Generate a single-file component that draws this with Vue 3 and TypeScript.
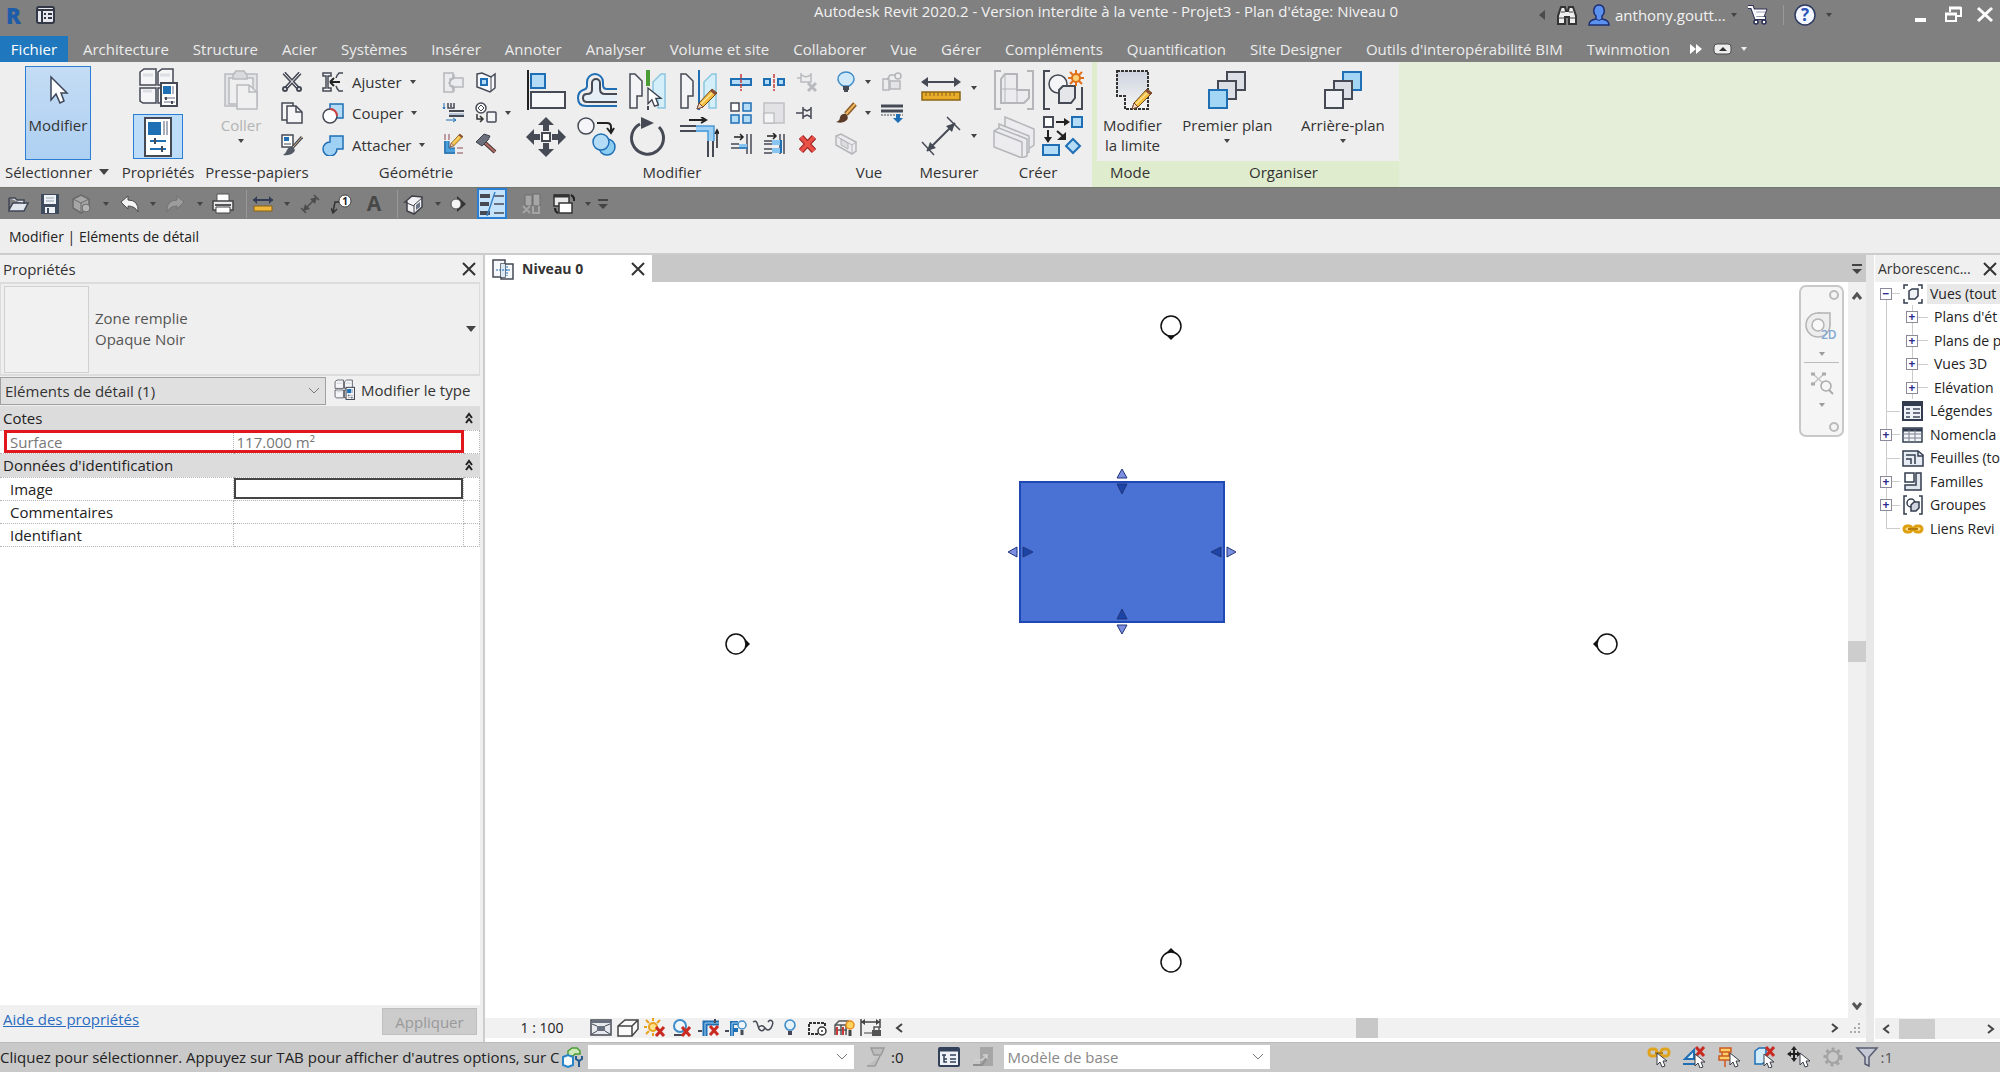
<script setup lang="ts">
import { h, ref } from 'vue'

type Size = [number, number]
interface Glyph { size: Size; body: string }

const cursor = (x: number, y: number) =>
  `<path transform="translate(${x} ${y})" d="M0 0v12l3-3 2 5 3-1-2-5h4z" fill="#fff" stroke="#3a3f4a"/>`
const redCross = (x: number, y: number) =>
  `<path transform="translate(${x} ${y})" d="M0 0l8 9M8 0L0 9" stroke="#c92a22" stroke-width="3"/>`
const pencil = (x: number, y: number) =>
  `<g transform="translate(${x} ${y})"><path d="M0 20l2-6L15 0l5 4L6 18z" fill="#f4bd3c" stroke="#6b4a1c"/><path d="M4 15L17 2" stroke="#fbe39a" stroke-width="1.5"/><path d="M15 0l5 4-2 2-5-4z" fill="#8a4d36"/><path d="M0 20l2-6 4 4z" fill="#f6d9c4" stroke="#7a4a32"/></g>`
const dark = '#454a55'
const blue = '#1f6fb5'
const pale = '#b4dcf7'

const glyphs: Record<string, Glyph> = {
  menu: { size: [20, 20], body: `<rect x="2" y="2" width="17" height="16" rx="2" fill="#e8e8ee" stroke="#333847" stroke-width="2"/><path d="M2 5h17M7 5v13" stroke="#333847" stroke-width="2"/><path d="M9 9h2M13 9h4M9 13h2M13 13h4" stroke="#333847" stroke-width="2"/>` },
  left: { size: [8, 12], body: `<path d="M7 1v10L1 6z" fill="#4b4b4b"/>` },
  binoculars: { size: [22, 22], body: `<path d="M2 20V12l3-9h4l1 4h2l1-4h4l3 9v8h-7v-7h-4v7z" fill="#eee" stroke="#333" stroke-width="2"/><path d="M2 14h7M13 14h7M5 8h4M13 8h4" stroke="#444"/>` },
  user: { size: [22, 22], body: `<path d="M1 21q0-5 7-6v-3q-3-3-2-7 1-4 5-4t5 4q1 4-2 7v3q7 1 7 6z" fill="#5b92f0" stroke="#1d2e74" stroke-width="1.5"/><path d="M8 15q3 3 6 0" stroke="#1d2e74" fill="none"/>` },
  cart: { size: [22, 22], body: `<path d="M1 3h4l4 11h10" fill="none" stroke="#2c2f55" stroke-width="4"/><path d="M6 5h14l-3 8H9z" fill="#fff" stroke="#2c2f55"/><path d="M1 3h4l4 11h9" fill="none" stroke="#fff" stroke-width="2"/><path d="M9 8h9" stroke="#9ea3c4"/><circle cx="9" cy="18" r="2" fill="#fff" stroke="#2c2f55" stroke-width="1.5"/><circle cx="17" cy="18" r="2" fill="#fff" stroke="#2c2f55" stroke-width="1.5"/>` },
  help: { size: [22, 22], body: `<circle cx="11" cy="11" r="10" fill="#f4f7ff" stroke="#2d3a62" stroke-width="1.5"/><text x="11" y="17" text-anchor="middle" font-family="Open Sans, sans-serif" font-weight="700" font-size="17" fill="#2a55b8">?</text>` },
  minimize: { size: [20, 20], body: `<path d="M4 15h11" stroke="#fff" stroke-width="4"/>` },
  restore: { size: [20, 20], body: `<path d="M7 7V3h11v8h-4" fill="none" stroke="#fff" stroke-width="2"/><rect x="3" y="9" width="10" height="7" fill="none" stroke="#fff" stroke-width="2"/><path d="M2 9h12M6 3h12" stroke="#fff" stroke-width="3"/>` },
  closeWin: { size: [20, 20], body: `<path d="M3 3l14 13M17 3L3 16" stroke="#fff" stroke-width="3"/>` },
  more: { size: [14, 12], body: `<path d="M1 1v10l6-5zM7 1v10l6-5z" fill="#fff"/>` },
  panelToggle: { size: [20, 12], body: `<rect x="1" y="1" width="17" height="10" rx="3" fill="#eee" stroke="#4a4a4a"/><path d="M6 8l4-4 4 4z" fill="#333"/>` },
  caretWhite: { size: [6, 4], body: `<path d="M0 0h6L3 4z" fill="#eee"/>` },

  bigCursor: { size: [24, 32], body: `<path d="M5 2v23l5-6 4 9 4-2-3-8h6z" fill="#fff" stroke="#3c4658" stroke-width="1.5"/>` },
  typeProps: { size: [40, 40], body: `<g fill="#f6f6f8" stroke="${dark}" stroke-width="1.5"><path d="M2 4l4-3h12v16H2zM20 4l4-3h11v16H20zM2 20h16v15l-13 0-3-2zM20 20h14v15H20z"/></g><path d="M5 7h10M22 7h10M5 23h9" stroke="#dcdee4" stroke-width="3"/><rect x="23" y="15" width="16" height="23" fill="#fff" stroke="${dark}" stroke-width="2"/><rect x="25" y="18" width="8" height="8" fill="${blue}"/><path d="M35 18v8M26 30h11M26 34h11" stroke="#66708a"/><path d="M28 29v3M34 33v3" stroke="${dark}" stroke-width="2"/>` },
  props: { size: [32, 42], body: `<rect x="3" y="2" width="26" height="38" fill="#fff" stroke="${dark}" stroke-width="2"/><rect x="6" y="6" width="13" height="13" fill="${blue}"/><path d="M22 5v14M25 5v14" stroke="#a7adb9" stroke-width="2"/><path d="M8 25h16M8 33h16" stroke="${blue}" stroke-width="2"/><path d="M13 22v6M20 30v6" stroke="${dark}" stroke-width="2"/>` },
  paste: { size: [36, 42], body: `<g fill="#e4e4e6" stroke="#b9babe" stroke-width="1.5"><path d="M2 5h32v32H2z"/><path d="M6 9h24v26H6z" fill="#efefef"/><path d="M10 6l3-4h8l3 4v4H10z" fill="#dadadd"/><path d="M14 16h12l8 7v17H14z" fill="#f0f0f0"/><path d="M26 16v7h8" fill="none"/></g>` },
  cut: { size: [22, 22], body: `<path d="M3 2l14 15M19 2L5 17" stroke="${dark}" stroke-width="4"/><path d="M3 2l14 15M19 2L5 17" stroke="#fff"/><circle cx="4" cy="18" r="2" fill="#fff" stroke="${dark}" stroke-width="2"/><circle cx="18" cy="18" r="2" fill="#fff" stroke="${dark}" stroke-width="2"/>` },
  copyDoc: { size: [22, 22], body: `<g fill="#f5f5f7" stroke="${dark}" stroke-width="1.5"><path d="M1 1h11v17H1z"/><path d="M6 4h9l6 6v11H6z"/><path d="M15 4v6h6" fill="none"/></g>` },
  matchProps: { size: [22, 22], body: `<rect x="1" y="1" width="11" height="12" fill="#fff" stroke="${dark}" stroke-width="1.5"/><rect x="3" y="3" width="5" height="4" fill="${blue}"/><path d="M3 10h7" stroke="${dark}"/><path d="M21 3l-9 10" stroke="${dark}" stroke-width="3"/><path d="M21 3l-9 10" stroke="#d8b07a"/><path d="M2 21q3-2 4-5 2-4 6-3 3 3 1 5-4 4-11 3z" fill="#555b66"/>` },
  cope: { size: [22, 22], body: `<path d="M1 2h8v3H6v12h3v3H1v-3h3V5H1z" fill="#f5f5f5" stroke="${dark}" stroke-width="1.5"/><path d="M21 2h-4q-2 2-3 5M21 20h-4q-2-2-3-5" fill="none" stroke="${dark}" stroke-width="1.5"/><path d="M8 11h10M8 11l4-4M8 11l4 4" stroke="#222" stroke-width="2" fill="none"/>` },
  cutGeo: { size: [22, 22], body: `<rect x="8" y="2" width="13" height="14" fill="${pale}" stroke="${blue}" stroke-width="1.5"/><circle cx="8" cy="14" r="7" fill="#fff" stroke="${dark}" stroke-width="1.5"/><path d="M8 7a7 7 0 0 1 7 7" fill="none" stroke="#d24141" stroke-width="2"/>` },
  joinGeo: { size: [22, 22], body: `<path d="M8 2h13v13h-6a7 7 0 1 1-7-7z" fill="#9fd1f5" stroke="${blue}" stroke-width="1.5"/>` },
  joinRoof: { size: [22, 22], body: `<path d="M2 2h9v6h-3v7h3v6H2zM12 7h9v9h-9v3l-5-7 5-7z" fill="#ececee" stroke="#b5b6ba" stroke-width="1.5"/>` },
  wallJoin: { size: [22, 22], body: `<path d="M2 3l5-1 9 4 4-3v14l-5 4-10-4-3-1z" fill="#f6f8fb" stroke="${dark}" stroke-width="1.5"/><path d="M16 6v14" stroke="${dark}"/><rect x="6" y="8" width="6" height="6" fill="${pale}" stroke="${blue}" stroke-width="2"/>` },
  beamJoin: { size: [22, 22], body: `<path d="M6 1v5h6V1M9 1v4" fill="none" stroke="${dark}" stroke-width="1.5"/><path d="M2 1v6M1 5l1 2 1-2" stroke="${blue}"/><path d="M7 9h15M7 14h15" stroke="${dark}" stroke-width="2"/><path d="M7 12h15" stroke="#b8c4d8" stroke-width="2"/><path d="M4 18h10" stroke="${blue}"/><path d="M11 16l3 2-3 2" stroke="${blue}" fill="none"/>` },
  splitFace: { size: [24, 22], body: `<circle cx="7" cy="6" r="5" fill="#fff" stroke="${dark}" stroke-width="1.5"/><path d="M4 6l3-3 3 3-3 3z" fill="none" stroke="${dark}"/><rect x="13" y="10" width="9" height="10" rx="1" fill="#f5f5f7" stroke="${dark}" stroke-width="1.5"/><path d="M3 12v5h6M6 14l3 3-3 3" fill="none" stroke="#333" stroke-width="1.5"/>` },
  cornerEdit: { size: [22, 22], body: `<path d="M2 8h5v7h6v6H2z" fill="#4aa0dd"/><path d="M3 8v12h10M7 8v7h6" fill="none" stroke="#235a90"/><path d="M3 1v6M7 1v6M15 15h6M15 20h6" stroke="#8a4a55"/><g transform="translate(8 1) scale(.65)">${pencil(0, 0)}</g>` },
  demolish: { size: [22, 22], body: `<path d="M9 9l11 10" stroke="#4b3130" stroke-width="4"/><path d="M9 9l11 10" stroke="#b07068" stroke-width="2"/><path d="M1 9l8-8 6 2-2 4-6 6z" fill="#6b717c" stroke="#3d414b"/>` },

  align: { size: [40, 40], body: `<path d="M2 0v40" stroke="#222" stroke-width="2"/><rect x="5" y="4" width="14" height="14" fill="${pale}" stroke="${blue}" stroke-width="2"/><rect x="5" y="22" width="34" height="16" fill="#f6f6f8" stroke="${dark}" stroke-width="2"/>` },
  offset: { size: [40, 40], body: `<path d="M40 19H30q-4 0-4-4v-3a8 8 0 0 0-16 0v4q0 3-4 4-5 2-5 8 0 8 8 8h31" fill="none" stroke="${blue}" stroke-width="2"/><path d="M40 24H28q-5 0-5-5v-6a4 4 0 0 0-8 0v7q0 4-5 4-4 0-4 4t4 4h30" fill="#e6eef6" stroke="${dark}" stroke-width="2"/>` },
  mirrorPick: { size: [40, 40], body: `<path d="M2 4h5l7 7v15H9v12H2z" fill="#f4f4f6" stroke="${dark}" stroke-width="1.5"/><path d="M37 4h-4l-8 8v16l5 2v8h7z" fill="#d4eefa" stroke="#8bc6e0" stroke-width="1.5"/><path d="M20 0v16" stroke="#4a9c34" stroke-width="4"/><path d="M20 36v4" stroke="${dark}" stroke-width="2"/><g transform="translate(20 18) scale(1.3)">${cursor(0, 0)}</g>` },
  mirrorDraw: { size: [40, 40], body: `<path d="M2 4h5l7 7v15H9v12H2z" fill="#f4f4f6" stroke="${dark}" stroke-width="1.5"/><path d="M37 4h-4l-8 8v16l5 2v8h7z" fill="#d4eefa" stroke="#8bc6e0" stroke-width="1.5"/><path d="M20 0v40" stroke="${blue}" stroke-width="2"/>${pencil(18, 19)}` },
  move: { size: [40, 40], body: `<path d="M20 0l8 8h-5v6h-6V8h-5zM20 40l8-8h-5v-6h-6v6h-5zM0 20l8-8v5h6v6H8v5zM40 20l-8-8v5h-6v6h6v5z" fill="${dark}"/><rect x="16" y="16" width="8" height="8" fill="#fff" stroke="${dark}" stroke-width="2"/>` },
  copy: { size: [40, 40], body: `<circle cx="9" cy="9" r="8" fill="#f6f6f8" stroke="${dark}" stroke-width="1.5"/><path d="M20 6h10q4 0 4 4v5M30 11l4 5 3-5" fill="none" stroke="#222" stroke-width="2"/><circle cx="30" cy="30" r="8" fill="#8ecdf2" stroke="${blue}" stroke-width="1.5"/><circle cx="24" cy="25" r="8" fill="${pale}" stroke="${blue}" stroke-width="1.5"/>` },
  rotate: { size: [40, 40], body: `<path d="M12 7a16 16 0 1 0 19 3" fill="none" stroke="${dark}" stroke-width="3"/><path d="M13 0l13 6-13 6z" fill="${dark}"/>` },
  trim: { size: [40, 40], body: `<path d="M17 9h18v15h-6v-9H17z" fill="#9fd1f5"/><path d="M10 3h17M22 0l5 3-5 3" fill="none" stroke="#222" stroke-width="2"/><path d="M1 9h16M1 14h16M29 24v16M34 24v16" stroke="${dark}" stroke-width="2"/><path d="M17 9h18v15M17 14h12v10" fill="none" stroke="#4a9ad8" stroke-width="1.5"/><path d="M38 31V13M36 17l2-4 2 4" stroke="#222" stroke-width="1.5" fill="none"/>` },
  split: { size: [22, 22], body: `<rect x="1" y="8" width="20" height="6" fill="${pale}" stroke="${blue}" stroke-width="2"/><path d="M11 3v17" stroke="#c83a3a" stroke-width="1.5" stroke-dasharray="4 1"/>` },
  splitGap: { size: [22, 22], body: `<rect x="1" y="8" width="6" height="6" fill="${pale}" stroke="${blue}" stroke-width="2"/><rect x="15" y="8" width="6" height="6" fill="${pale}" stroke="${blue}" stroke-width="2"/><path d="M11 3v17" stroke="#c83a3a" stroke-width="1.5" stroke-dasharray="4 1"/>` },
  unpin: { size: [22, 22], body: `<path d="M5 2v9h10V2M5 4l5 2 5-2M1 7h4" stroke="#b9babe" fill="none" stroke-width="1.5"/><path d="M12 12l8 8M20 12l-8 8" stroke="#b9babe" stroke-width="3"/>` },
  array: { size: [22, 22], body: `<g stroke="${blue}" stroke-width="1.5" fill="${pale}"><rect x="1" y="1" width="8" height="8" fill="#fff" stroke="${dark}"/><rect x="13" y="1" width="8" height="8"/><rect x="1" y="13" width="8" height="8"/><rect x="13" y="13" width="8" height="8"/></g>` },
  scale: { size: [22, 22], body: `<rect x="1" y="1" width="20" height="20" fill="#e2e2e5" stroke="#c0c1c5" stroke-width="1.5"/><rect x="1" y="11" width="10" height="10" fill="#f4f4f4" stroke="#aeb0b5"/>` },
  pin: { size: [22, 22], body: `<path d="M0 11h7M7 5v12M15 5v12M7 7l4 2 4-2M7 15l4-2 4 2" fill="none" stroke="${dark}" stroke-width="1.5"/>` },
  trimOne: { size: [22, 22], body: `<path d="M4 4h9M10 1l3 3-3 3" fill="none" stroke="#222" stroke-width="1.5"/><path d="M1 11h8M1 15h8M17 1v20M21 1v20" stroke="${dark}" stroke-width="1.5"/><path d="M9 11h8v5H9z" fill="#86c4f1"/><path d="M9 15h9" stroke="${blue}" stroke-width="1.5"/>` },
  trimMany: { size: [22, 22], body: `<path d="M4 3h9M10 0l3 3-3 3" fill="none" stroke="#222" stroke-width="1.5"/><path d="M1 8h8M1 11h8M1 16h8M1 20h8M17 1v20M21 1v20" stroke="${dark}" stroke-width="1.5"/><path d="M9 7h8v5H9zM9 15h8v5H9z" fill="#86c4f1"/><path d="M18 7v13" stroke="${blue}" stroke-width="2"/>` },
  remove: { size: [22, 22], body: `<path d="M5 4l13 14M18 4L5 18" stroke="#9b1d1d" stroke-width="6"/><path d="M5 4l13 14M18 4L5 18" stroke="#e85048" stroke-width="4"/>` },

  bulb: { size: [22, 22], body: `<path d="M8 15q-5-3-5-7a8 7 0 0 1 16 0q0 4-5 7z" fill="#cfe9fb" stroke="#3f8cc8" stroke-width="1.5"/><path d="M8 16h6M8 18h6M9 20h4" stroke="${dark}" stroke-width="2"/>` },
  box3: { size: [22, 22], body: `<path d="M2 8h6v11H2zM6 9l3-5h5" fill="#ececee" stroke="#b5b6ba" stroke-width="1.5"/><circle cx="17" cy="5" r="3" fill="#eee" stroke="#b5b6ba" stroke-width="1.5"/><path d="M9 10h10v8H9z" fill="#e4e4e6" stroke="#b5b6ba" stroke-width="1.5"/>` },
  brush: { size: [22, 22], body: `<path d="M20 2l-9 10" stroke="#8a5a24" stroke-width="5"/><path d="M20 2l-9 10" stroke="#edb65e" stroke-width="2"/><path d="M1 20q4-1 4-5 2-4 6-3 3 3 1 6-4 4-11 2z" fill="#5b3a28"/>` },
  lines: { size: [22, 22], body: `<path d="M0 4h22M0 9h22" stroke="${dark}" stroke-width="3"/><path d="M0 13h22" stroke="${dark}" stroke-dasharray="2 1"/><path d="M15 12v4h-3l5 5 5-5h-3v-4z" fill="${blue}"/>` },
  greyCube: { size: [22, 22], body: `<path d="M1 3l5-2 15 8v9l-4 3L1 12z" fill="#ececee" stroke="#b5b6ba" stroke-width="1.5"/><path d="M6 6v6l7 4v-6z" fill="#ddd" stroke="#b5b6ba"/><path d="M1 3l16 9v9M17 12l4-3" fill="none" stroke="#b5b6ba"/>` },
  ruler: { size: [40, 40], body: `<path d="M2 14h36" stroke="${dark}" stroke-width="2"/><path d="M0 14l7-5v10zM40 14l-7-5v10z" fill="${dark}"/><rect x="1" y="24" width="38" height="8" fill="#e8ac28" stroke="#8a6414" stroke-width="1.5"/><path d="M5 24v4M9 24v4M13 24v4M17 24v4M21 24v4M25 24v4M29 24v4M33 24v4" stroke="#8a6414"/>` },
  dimension: { size: [40, 40], body: `<path d="M6 35L34 7" stroke="${dark}" stroke-width="2"/><path d="M1 26l12 13M26 1l13 13" stroke="${dark}" stroke-width="1.5"/><path d="M6 35l3-9 6 6zM34 7l-9 3 6 6z" fill="${dark}"/>` },
  assembly: { size: [42, 42], body: `<g fill="#ececee" stroke="#b5b6ba" stroke-width="2"><path d="M8 2H2v38h6M34 2h6v38h-6" fill="none"/><path d="M8 10l4-5h12v16h12v8l-5 5H8z"/><path d="M8 20h16v14M12 5v29" fill="none" stroke-width="1"/></g>` },
  group: { size: [42, 42], body: `<path d="M8 2H2v38h6M34 40h6V18" fill="none" stroke="${dark}" stroke-width="2"/><circle cx="16" cy="15" r="9" fill="#f5f5f7" stroke="${dark}" stroke-width="1.5"/><path d="M17 21l4-4h12v12l-4 5H17z" fill="#e4e6ea" stroke="${dark}" stroke-width="2"/><path d="M34 1v16M26 9h16M28 3l12 12M40 3L28 15" stroke="#e0701a" stroke-width="2"/><circle cx="34" cy="9" r="4" fill="#fbd27a" stroke="#e0701a" stroke-width="2"/>` },
  parts: { size: [42, 42], body: `<g fill="#ececee" stroke="#b5b6ba" stroke-width="1.5"><path d="M12 1l29 12v16l-4 3-25-12z"/><path d="M6 8l30 12v16l-4 2L6 27z"/><path d="M1 15l5-3 28 11v17l-5 2-28-11z"/><path d="M1 15l28 11v15" fill="none"/></g>` },
  similar: { size: [42, 42], body: `<rect x="2" y="1" width="9" height="10" fill="#fff" stroke="${dark}" stroke-width="2"/><rect x="30" y="1" width="10" height="10" fill="${pale}" stroke="${blue}" stroke-width="2"/><rect x="1" y="29" width="16" height="10" fill="${pale}" stroke="${blue}" stroke-width="2"/><path d="M31 23l7 7-7 7-7-7z" fill="${pale}" stroke="${blue}" stroke-width="2"/><path d="M14 6h10M6 14v9M15 15l7 6" stroke="#222" stroke-width="2"/><path d="M22 2l6 4-6 4zM2 21l4 6 4-6zM24 16v8h-9z" fill="#222"/>` },
  boundary: { size: [40, 42], body: `<defs><linearGradient id="gb" x1="0" y1="0" x2="0" y2="1"><stop offset="0" stop-color="#cdd3de"/><stop offset="1" stop-color="#f6f6f6"/></linearGradient></defs><path d="M4 2h31v38H12V27H4z" fill="url(#gb)" stroke="#333" stroke-width="2" stroke-dasharray="3 1"/>${pencil(19, 20)}` },
  front: { size: [40, 40], body: `<g stroke="${dark}" stroke-width="2" fill="#dcdfe6"><path d="M20 2h18v18H20z"/><path d="M11 11h18v18H11z"/><path d="M2 20h18v18H2z" fill="#a3d5f5" stroke="${blue}"/></g>` },
  back: { size: [40, 40], body: `<g stroke="${dark}" stroke-width="2" fill="#dcdfe6"><path d="M20 2h18v18H20z" fill="#a3d5f5" stroke="${blue}"/><path d="M11 11h18v18H11z"/><path d="M2 20h18v18H2z" fill="#eef0f4"/></g>` },

  open: { size: [22, 22], body: `<path d="M2 5h6l2 2h7v4M2 5v12l4-7h15l-4 8H2" fill="#e2e7ee" stroke="#3f4653" stroke-width="1.5"/>` },
  save: { size: [22, 22], body: `<path d="M2 1h18v20H2z" fill="#3f4a5c"/><path d="M5 2h12v9H5zM6 14h10v6H6z" fill="#eef1f5"/><path d="M7 5h8M7 8h8" stroke="#9aa4b4"/><path d="M9 15v5" stroke="#3f4a5c" stroke-width="2"/>` },
  sync: { size: [22, 22], body: `<path d="M2 6l8-4 8 4v9l-8 5-8-5z" fill="#a6a6a6" stroke="#6a6a6a" stroke-width="1.5"/><path d="M2 6l8 4 8-4M10 10v9" fill="none" stroke="#6a6a6a"/><circle cx="15" cy="15" r="4" fill="#b4b4b4" stroke="#6a6a6a"/>` },
  undo: { size: [22, 22], body: `<path d="M3 9l7-6v4q11 0 10 12-3-6-10-6v3z" fill="#f4f4f4" stroke="#4a4a4a"/>` },
  redo: { size: [22, 22], body: `<path d="M19 9l-7-6v4Q1 7 2 19q3-6 10-6v3z" fill="#9c9c9c" stroke="#727272"/>` },
  print: { size: [22, 22], body: `<path d="M5 1h12v8H5z" fill="#fff" stroke="#555"/><path d="M1 8h20v9H1z" fill="#e9eaee" stroke="#444" stroke-width="1.5"/><path d="M4 14h14v6H4z" fill="#fff" stroke="#444"/><path d="M3 12h16" stroke="#555" stroke-width="2"/>` },
  rulerSm: { size: [22, 22], body: `<path d="M1 7h20" stroke="#333c55" stroke-width="2"/><path d="M1 7l4-4v8zM21 7l-4-4v8z" fill="#333c55"/><path d="M2 13h18v5H2z" fill="#eeb63a" stroke="#8a6414"/>` },
  dimSm: { size: [22, 22], body: `<path d="M5 17L17 5M2 15l5 5M15 2l5 5" stroke="#4d4d4d" stroke-width="1.5"/><path d="M4 18l2-7 5 5zM18 4l-7 2 5 5z" fill="#4d4d4d"/>` },
  tag: { size: [22, 22], body: `<circle cx="14" cy="8" r="6" fill="#fff" stroke="#444"/><text x="14" y="12" text-anchor="middle" font-family="Open Sans, sans-serif" font-weight="700" font-size="10" fill="#222">1</text><path d="M8 9H4L2 19M0 15l2 5 4-4" fill="none" stroke="#333" stroke-width="1.5"/>` },
  textA: { size: [22, 28], body: `<text x="11" y="21" text-anchor="middle" font-family="Open Sans, sans-serif" font-weight="700" font-size="21" fill="#484848">A</text>` },
  house: { size: [22, 22], body: `<path d="M2 9l7-6 10 1v10l-8 7-7-3V9z" fill="#f2f2f4" stroke="#3f3f48" stroke-width="1.5"/><path d="M11 21v-9l8-7M4 10l7 3" fill="none" stroke="#3f3f48"/><path d="M13 12l4-3v5l-4 3z" fill="#6a7385"/>` },
  section: { size: [22, 22], body: `<path d="M7 3l9 8-9 8z" fill="#333"/><circle cx="6" cy="11" r="5" fill="#f5f5f5" stroke="#555"/>` },
  thin: { size: [26, 26], body: `<path d="M1 5h10M1 13h9M1 22h10" stroke="${dark}" stroke-width="4"/><path d="M15 5h10M15 13h10M15 22h10" stroke="${dark}" stroke-width="1.5"/><path d="M16 1L8 25" stroke="#3a84c9" stroke-width="1.5"/>` },
  closeHidden: { size: [22, 22], body: `<path d="M4 2h7v11H4zM12 1h7v12h-7z" fill="#a6a6a6" stroke="#6c6c6c"/><path d="M2 13l7 7M9 13l-7 7M12 13v7h6v-7" stroke="#a4a4a4" stroke-width="2"/>` },
  switchWin: { size: [22, 22], body: `<path d="M1 2h15v11H1z" fill="#e9e9ec" stroke="#333" stroke-width="1.5"/><path d="M1 3h15" stroke="#333" stroke-width="3"/><path d="M6 10h13v10H6z" fill="#fff" stroke="#333" stroke-width="1.5"/><path d="M18 2q4 2 3 6M2 15q0 4 3 5" stroke="#222" stroke-width="2" fill="none"/>` },
  customize: { size: [12, 14], body: `<path d="M1 3h10" stroke="#444" stroke-width="2"/><path d="M1 7h10l-5 5z" fill="#444"/>` },

  sheet: { size: [22, 22], body: `<path d="M1 2h12v17H1zM9 6h12v15H9z" fill="#f6f8fb" stroke="${dark}" stroke-width="1.5"/><path d="M9 6h4v13H9z" fill="#dce8f4"/><path d="M4 12h14M15 8v10" stroke="${blue}" stroke-dasharray="2 1"/>` },
  x: { size: [14, 14], body: `<path d="M1 1l12 12M13 1L1 13" stroke="#333" stroke-width="2"/>` },
  caret: { size: [6, 4], body: `<path d="M0 0h6L3 4z" fill="#444"/>` },
  caretBig: { size: [10, 6], body: `<path d="M0 0h10L5 6z" fill="#444"/>` },
  collapse: { size: [10, 12], body: `<path d="M2 6l3-4 3 4M2 11l3-4 3 4" fill="none" stroke="#222" stroke-width="2"/>` },
  chevDown: { size: [12, 8], body: `<path d="M1 1l5 5 5-5" fill="none" stroke="#777"/>` },
  up: { size: [12, 8], body: `<path d="M2 7l4-5 4 5" fill="none" stroke="#555" stroke-width="3"/>` },
  down: { size: [12, 8], body: `<path d="M2 1l4 5 4-5" fill="none" stroke="#555" stroke-width="3"/>` },
  chevLeft: { size: [8, 12], body: `<path d="M7 2L2 6l5 4" fill="none" stroke="#444" stroke-width="2"/>` },
  chevRight: { size: [8, 12], body: `<path d="M1 2l5 4-5 4" fill="none" stroke="#444" stroke-width="2"/>` },
  grip: { size: [14, 14], body: `<path d="M11 3h2M7 7h2M11 7h2M3 11h2M7 11h2M11 11h2" stroke="#aaa" stroke-width="2"/>` },
  wheel: { size: [36, 34], body: `<circle cx="14" cy="15" r="12" fill="#ededed" stroke="#b3b3b3" stroke-width="1.5"/><path d="M14 3h12v12" fill="#ededed" stroke="#b3b3b3" stroke-width="1.5"/><circle cx="14" cy="15" r="6" fill="#f8f8f8" stroke="#b3b3b3" stroke-width="1.5"/><text x="17" y="29" font-family="Open Sans, sans-serif" font-weight="600" font-size="12" fill="#7fa8d0">2D</text>` },
  zoomFit: { size: [24, 24], body: `<path d="M3 3l10 9M14 3L3 13" stroke="#c4c4c4" stroke-width="1.5"/><path d="M1 3h4M12 3h4M1 13h4" stroke="#aaa" stroke-width="3"/><circle cx="16" cy="15" r="5" fill="#f6f6f6" stroke="#aaa" stroke-width="1.5"/><path d="M19 19l4 4" stroke="#aaa" stroke-width="2"/>` },

  detail: { size: [22, 20], body: `<rect x="1" y="2" width="20" height="15" fill="#e7e9ee" stroke="${dark}" stroke-width="1.5"/><path d="M1 4h20" stroke="#68707f" stroke-width="2"/><rect x="7" y="8" width="8" height="5" fill="#68707f"/><path d="M2 16l5-3M20 16l-5-3M2 6l5 2M20 6l-5 2" stroke="${dark}"/>` },
  cube: { size: [22, 20], body: `<path d="M1 8l7-6h13v9l-6 7H1zM1 8h14v10M15 8l6-6" fill="#fafafa" stroke="#444" stroke-width="1.5"/>` },
  sunOff: { size: [22, 20], body: `<circle cx="9" cy="9" r="4" fill="#ffe38a" stroke="#e8a21c" stroke-width="2"/><path d="M9 0v3M9 15v3M0 9h3M2 2l3 3M16 2l-3 3M2 16l3-3" stroke="#e8a21c" stroke-width="2"/>${redCross(12, 9)}` },
  shadowOff: { size: [22, 20], body: `<circle cx="9" cy="8" r="6" fill="#eef6fc" stroke="#3f8cc8" stroke-width="2"/><path d="M3 17h9" stroke="${dark}" stroke-width="2"/>${redCross(11, 9)}` },
  cropOff: { size: [22, 20], body: `<path d="M7 18V5h14" fill="none" stroke="${blue}" stroke-width="5"/><path d="M7 18V5h14" fill="none" stroke="#a9d4f2"/><path d="M0 13h4M17 1v4" stroke="${dark}" stroke-width="2"/>${redCross(12, 8)}` },
  cropShow: { size: [22, 20], body: `<path d="M7 18V5h6M7 12h6" fill="none" stroke="${blue}" stroke-width="4"/><path d="M7 18V5h6" fill="none" stroke="#a9d4f2"/><path d="M0 13h4" stroke="${dark}" stroke-width="2"/><circle cx="17" cy="7" r="4" fill="#eef6fc" stroke="#3f8cc8" stroke-width="1.5"/><path d="M17 12v5" stroke="${dark}" stroke-width="3"/>` },
  glasses: { size: [22, 20], body: `<path d="M1 4q3-2 4 1t2 6q3 4 6-1 3 4 6 0 3-5 1-7-2-2-4 1M7 9q3-3 6 1" fill="none" stroke="${dark}" stroke-width="1.5"/>` },
  bulbSm: { size: [12, 20], body: `<path d="M4 12q-3-2-3-5a5 5 0 0 1 10 0q0 3-3 5z" fill="#e4f2fc" stroke="#3f8cc8" stroke-width="1.5"/><path d="M4 14h4M4 16h4" stroke="#445" stroke-width="2"/>` },
  tempView: { size: [22, 20], body: `<path d="M12 16H3V5h16v4" fill="none" stroke="#333" stroke-width="2" stroke-dasharray="3 1"/><circle cx="16" cy="13" r="4" fill="#fff" stroke="#333" stroke-width="1.5"/><circle cx="16" cy="13" r="1" fill="#333"/>` },
  analytic: { size: [22, 20], body: `<path d="M2 17V7l4-4h9l-2 4H2M2 12h12M8 17V7M13 17V7" fill="none" stroke="#555" stroke-width="1.5"/><path d="M4 9v8M10 9v8" stroke="#c83a3a" stroke-width="2"/><circle cx="17" cy="7" r="4" fill="#ffd35e" stroke="#e8891c" stroke-width="1.5"/><path d="M17 12v6" stroke="#444" stroke-width="3"/>` },
  constraint: { size: [24, 20], body: `<path d="M2 1v17M21 1v9M2 4h19" stroke="#444" stroke-width="1.5"/><path d="M2 4l4-3v6zM21 4l-4-3v6z" fill="#444"/><path d="M5 15h8" stroke="#999" stroke-width="2"/><rect x="13" y="12" width="9" height="6" fill="#555"/><path d="M15 12V9h5v3" fill="none" stroke="#555" stroke-width="1.5"/>` },

  tools: { size: [22, 22], body: `<path d="M6 10V5l4-3h5l3 3v3h-5l-2 2z" fill="#cdeab8" stroke="#4a9c34" stroke-width="1.5"/><path d="M1 11l5-2 5 2v8l-5 2-5-2z" fill="#f4fafe" stroke="#2a86c6" stroke-width="2"/><path d="M14 10v3l3 2 3-2v-3M17 14v7" stroke="#235a90" fill="none" stroke-width="2"/>` },
  editReq: { size: [20, 22], body: `<path d="M5 2h13l-3 7H8zM1 20h8l5-10" fill="#bdbdbd" stroke="#9a9a9a" stroke-width="1.5"/>` },
  workset: { size: [22, 22], body: `<rect x="1" y="2" width="20" height="18" rx="1" fill="#eef1f5" stroke="#33405a" stroke-width="2"/><path d="M1 4h20" stroke="#33405a" stroke-width="3"/><path d="M4 9h4M6 9v7h3M6 13h3M12 9h6M12 13h6M12 16h6" stroke="#33405a" stroke-width="1.5" fill="none"/>` },
  exclude: { size: [22, 22], body: `<path d="M8 1h13v19H8z" fill="#a6a6a6"/><path d="M1 19h9l6-9" stroke="#8f8f8f" stroke-width="2" fill="none"/><path d="M3 14h7l4-4M11 9h4v4" stroke="#d2d2d2" fill="none" stroke-width="1.5"/>` },
  selLinks: { size: [24, 22], body: `<rect x="2" y="3" width="8" height="7" rx="3" fill="none" stroke="#e0a41c" stroke-width="3"/><rect x="14" y="3" width="8" height="7" rx="3" fill="none" stroke="#e0a41c" stroke-width="3"/><path d="M8 7h8" stroke="#b67f0c" stroke-width="2"/>${cursor(10, 7)}` },
  selUnder: { size: [24, 22], body: `<path d="M1 18h14M3 13l9-9v9z" fill="#d9ecfa" stroke="${blue}" stroke-width="2"/>${redCross(14, 1)}${cursor(13, 8)}` },
  selPinned: { size: [24, 22], body: `<path d="M3 2h11v4H3zM5 6h7v4H5zM2 10h13v4H2zM8 14v7" fill="#ffcf6a" stroke="#cc5a22" stroke-width="1.5"/>${cursor(13, 7)}` },
  selFace: { size: [24, 22], body: `<path d="M3 5l4-3h7v13l-4 3H3z" fill="#d3ecfb" stroke="${blue}" stroke-width="1.5"/>${redCross(14, 1)}${cursor(12, 8)}` },
  dragSel: { size: [24, 22], body: `<path d="M7 2v12M1 8h12" stroke="#222" stroke-width="2"/><path d="M7 0L4 4h6zM7 16l-3-4h6zM0 8l4-3v6zM14 8l-4-3v6z" fill="#222"/>${cursor(13, 7)}` },
  gear: { size: [22, 22], body: `<circle cx="11" cy="11" r="6" fill="none" stroke="#a2a2a2" stroke-width="2"/><circle cx="11" cy="11" r="8" fill="none" stroke="#a2a2a2" stroke-width="3" stroke-dasharray="3 3"/>` },
  filter: { size: [24, 22], body: `<path d="M2 2h20l-8 9v9l-4-2v-7z" fill="#c5c9d6" stroke="#565b70" stroke-width="1.5"/>` },

  views: { size: [20, 20], body: `<path d="M5 1H1v4M15 1h4v4M5 19H1v-4M15 19h4v-4" fill="none" stroke="#333c4e" stroke-width="1.5"/><path d="M6 7l3-2h6v7l-3 3H6z" fill="#eef1f5" stroke="#333c4e" stroke-width="1.5"/>` },
  legend: { size: [22, 20], body: `<rect x="1" y="1" width="19" height="18" fill="#eef1f5" stroke="#333c4e" stroke-width="2"/><path d="M1 3h19" stroke="#333c4e" stroke-width="4"/><path d="M4 8h4M4 12h4M4 16h4M11 8h7M11 12h7M11 16h7" stroke="#6a7282" stroke-width="2"/>` },
  schedule: { size: [22, 18], body: `<rect x="1" y="2" width="19" height="14" fill="#f4f5f8" stroke="#333c4e" stroke-width="1.5"/><path d="M1 4h19" stroke="#333c4e" stroke-width="3"/><path d="M1 8h19M1 12h19M7 4v12M13 4v12" stroke="#7b8190"/>` },
  sheets: { size: [22, 18], body: `<path d="M1 2h15l5 4v11H1z" fill="#e7ecf4" stroke="#333c4e" stroke-width="1.5"/><path d="M4 6h9v9M4 10h5v5M16 2v5h5" fill="none" stroke="#333c4e" stroke-width="1.5"/>` },
  families: { size: [20, 20], body: `<rect x="2" y="1" width="9" height="9" fill="#fff" stroke="#333c4e" stroke-width="1.5"/><path d="M13 1h5v17H2v-5h11z" fill="#e2e7ee" stroke="#333c4e" stroke-width="1.5"/>` },
  groups: { size: [20, 20], body: `<path d="M4 1H1v18h3M16 1h3v18h-3" fill="none" stroke="#333c4e" stroke-width="1.5"/><circle cx="8" cy="8" r="4" fill="#fff" stroke="#333c4e" stroke-width="1.5"/><path d="M8 10l3-3h5v6l-3 3H8z" fill="#cfd5df" stroke="#333c4e" stroke-width="1.5"/>` },
  link: { size: [22, 14], body: `<rect x="2" y="4" width="8" height="6" rx="3" fill="#ffe08a" stroke="#dca010" stroke-width="3"/><rect x="12" y="4" width="8" height="6" rx="3" fill="#ffe08a" stroke="#dca010" stroke-width="3"/><path d="M6 7h10" stroke="#b87a08" stroke-width="2"/>` },
}

const Glyph = (p: { n: string }) => {
  const g = glyphs[p.n]
  return h('svg', { width: g.size[0], height: g.size[1], viewBox: `0 0 ${g.size[0]} ${g.size[1]}`, 'aria-hidden': 'true', fill: 'none', innerHTML: g.body })
}
Glyph.props = ['n']

const tabs = ['Architecture', 'Structure', 'Acier', 'Systèmes', 'Insérer', 'Annoter', 'Analyser', 'Volume et site', 'Collaborer', 'Vue', 'Gérer', 'Compléments', 'Quantification', 'Site Designer', "Outils d'interopérabilité BIM", 'Twinmotion']
const clipboard = ['cut', 'copyDoc', 'matchProps']
const geometry = [
  { icon: 'cope', label: 'Ajuster' },
  { icon: 'cutGeo', label: 'Couper' },
  { icon: 'joinGeo', label: 'Attacher' },
]
const geometryTools = ['joinRoof', 'wallJoin', 'beamJoin', 'splitFace', 'cornerEdit', 'demolish']
const modifyLarge = ['align', 'offset', 'mirrorPick', 'mirrorDraw', 'move', 'copy', 'rotate', 'trim']
const modifySmall = ['split', 'splitGap', 'unpin', 'array', 'scale', 'pin', 'trimOne', 'trimMany', 'remove']
const create = ['assembly', 'group', 'parts', 'similar']

interface Quick { icon: string; menu?: boolean; kind?: 'sep' | 'active' | 'after' | 'narrow' }
const quick: Quick[] = [
  { icon: 'open' }, { icon: 'save' }, { icon: 'sync', menu: true }, { icon: 'undo', menu: true }, { icon: 'redo', menu: true },
  { icon: 'print' }, { icon: '', kind: 'sep' }, { icon: 'rulerSm', menu: true }, { icon: 'dimSm' }, { icon: 'tag' }, { icon: 'textA' },
  { icon: '', kind: 'sep' }, { icon: 'house', menu: true }, { icon: 'section' }, { icon: 'thin', kind: 'active' },
  { icon: 'closeHidden', kind: 'after' }, { icon: 'switchWin', menu: true }, { icon: 'customize', kind: 'narrow' },
]
const viewTools = ['detail', 'cube', 'sunOff', 'shadowOff', 'cropOff', 'cropShow', 'glasses', 'bulbSm', 'tempView', 'analytic', 'constraint']
const selectTools = ['selLinks', 'selUnder', 'selPinned', 'selFace', 'dragSel', 'gear']

const identity = [
  { id: 'image', label: 'Image' },
  { id: 'comments', label: 'Commentaires' },
  { id: 'ident', label: 'Identifiant' },
]
const values = ref<Record<string, string>>({ image: '', comments: '', ident: '' })

interface Node { label: string; icon?: string; toggle?: '+' | '-'; child?: boolean; current?: boolean }
const tree: Node[] = [
  { label: 'Vues (tout', icon: 'views', toggle: '-', current: true },
  { label: "Plans d'ét", toggle: '+', child: true },
  { label: 'Plans de p', toggle: '+', child: true },
  { label: 'Vues 3D', toggle: '+', child: true },
  { label: 'Elévation', toggle: '+', child: true },
  { label: 'Légendes', icon: 'legend' },
  { label: 'Nomencla', icon: 'schedule', toggle: '+' },
  { label: 'Feuilles (to', icon: 'sheets' },
  { label: 'Familles', icon: 'families', toggle: '+' },
  { label: 'Groupes', icon: 'groups', toggle: '+' },
  { label: 'Liens Revi', icon: 'link' },
]

const elevations = [
  { x: 686, y: 44, turn: 90 },
  { x: 251, y: 362, turn: 0 },
  { x: 1122, y: 362, turn: 180 },
  { x: 686, y: 680, turn: 270 },
]
const grips = [
  { x: 637, y: 199, turn: 90 },
  { x: 637, y: 340, turn: 270 },
  { x: 535, y: 270, turn: 0 },
  { x: 739, y: 270, turn: 180 },
]
</script>

<template>
  <div class="app">
    <header class="titlebar">
      <div class="title-left">
        <span class="logo">R</span>
        <button class="plain" aria-label="Menu"><Glyph n="menu" /></button>
      </div>
      <h1>Autodesk Revit 2020.2 - Version interdite à la vente - Projet3 - Plan d'étage: Niveau 0</h1>
      <div class="title-right">
        <Glyph n="left" />
        <button class="plain" aria-label="Rechercher"><Glyph n="binoculars" /></button>
        <button class="plain account"><Glyph n="user" /><span>anthony.goutt...</span><Glyph n="caret" /></button>
        <button class="plain" aria-label="Boutique"><Glyph n="cart" /></button>
        <i class="bar"></i>
        <button class="plain help" aria-label="Aide"><Glyph n="help" /><Glyph n="caret" /></button>
        <div class="window-buttons">
          <button class="plain" aria-label="Réduire"><Glyph n="minimize" /></button>
          <button class="plain" aria-label="Restaurer"><Glyph n="restore" /></button>
          <button class="plain" aria-label="Fermer"><Glyph n="closeWin" /></button>
        </div>
      </div>
    </header>

    <nav class="tabs">
      <button class="file">Fichier</button>
      <button v-for="t in tabs" :key="t" class="tab">{{ t }}</button>
      <button class="plain more" aria-label="Plus"><Glyph n="more" /></button>
      <button class="plain toggle" aria-label="Ruban"><Glyph n="panelToggle" /><Glyph n="caretWhite" /></button>
    </nav>

    <div class="ribbon">
      <section class="panel p-select">
        <div class="body"><button class="modify"><Glyph n="bigCursor" /><span>Modifier</span></button></div>
        <h2>Sélectionner <Glyph n="caretBig" /></h2>
      </section>
      <section class="panel p-props">
        <div class="body stack">
          <button class="plain" aria-label="Propriétés du type"><Glyph n="typeProps" /></button>
          <button class="pressed" aria-label="Propriétés"><Glyph n="props" /></button>
        </div>
        <h2>Propriétés</h2>
      </section>
      <section class="panel p-clip">
        <div class="body">
          <button class="large off" disabled><Glyph n="paste" /><span>Coller</span><Glyph n="caret" /></button>
          <div class="trio"><button v-for="c in clipboard" :key="c" class="plain" :aria-label="c"><Glyph :n="c" /></button></div>
        </div>
        <h2>Presse-papiers</h2>
      </section>
      <section class="panel p-geo">
        <div class="body">
          <div class="trio labelled">
            <button v-for="g in geometry" :key="g.label" class="plain"><Glyph :n="g.icon" /><span>{{ g.label }}</span><Glyph n="caret" /></button>
          </div>
          <div class="duo"><button v-for="g in geometryTools" :key="g" class="plain" :aria-label="g"><Glyph :n="g" /></button></div>
          <button class="plain geo-menu" aria-label="Options"><Glyph n="caret" /></button>
        </div>
        <h2>Géométrie</h2>
      </section>
      <section class="panel p-mod">
        <div class="body">
          <div class="mod-large"><button v-for="m in modifyLarge" :key="m" class="plain" :aria-label="m"><Glyph :n="m" /></button></div>
          <div class="mod-small"><button v-for="m in modifySmall" :key="m" class="plain" :aria-label="m"><Glyph :n="m" /></button></div>
        </div>
        <h2>Modifier</h2>
      </section>
      <section class="panel p-view">
        <div class="body view-grid">
          <button class="plain" aria-label="Masquer"><Glyph n="bulb" /><Glyph n="caret" /></button>
          <button class="plain" aria-label="Zone de sélection"><Glyph n="box3" /></button>
          <button class="plain" aria-label="Remplacer"><Glyph n="brush" /><Glyph n="caret" /></button>
          <button class="plain" aria-label="Style de ligne"><Glyph n="lines" /></button>
          <button class="plain" aria-label="Déplacer"><Glyph n="greyCube" /></button>
        </div>
        <h2>Vue</h2>
      </section>
      <section class="panel p-measure">
        <div class="body stack wide">
          <button class="plain" aria-label="Mesurer"><Glyph n="ruler" /><Glyph n="caret" /></button>
          <button class="plain" aria-label="Coter"><Glyph n="dimension" /><Glyph n="caret" /></button>
        </div>
        <h2>Mesurer</h2>
      </section>
      <section class="panel p-create">
        <div class="body create-grid"><button v-for="c in create" :key="c" class="plain" :aria-label="c"><Glyph :n="c" /></button></div>
        <h2>Créer</h2>
      </section>
      <section class="panel context p-mode">
        <div class="body"><button class="large"><Glyph n="boundary" /><span>Modifier<br />la limite</span></button></div>
        <h2>Mode</h2>
      </section>
      <section class="panel context p-arrange">
        <div class="body">
          <button class="large"><Glyph n="front" /><span>Premier plan</span><Glyph n="caret" /></button>
          <button class="large"><Glyph n="back" /><span>Arrière-plan</span><Glyph n="caret" /></button>
        </div>
        <h2>Organiser</h2>
      </section>
    </div>

    <div class="quick">
      <template v-for="(q, i) in quick" :key="i">
        <i v-if="q.kind === 'sep'" class="sep"></i>
        <button v-else class="plain" :class="q.kind" :aria-label="q.icon"><Glyph :n="q.icon" /></button>
        <button v-if="q.menu" class="plain drop" :aria-label="q.icon + ' menu'"><Glyph n="caret" /></button>
      </template>
    </div>

    <div class="options">Modifier | Eléments de détail</div>

    <main class="work">
      <aside class="properties">
        <div class="pane-head"><span>Propriétés</span><button class="plain" aria-label="Fermer"><Glyph n="x" /></button></div>
        <button class="type-box">
          <span class="thumb"></span>
          <span class="type-name">Zone remplie<br />Opaque Noir</span>
          <Glyph n="caretBig" />
        </button>
        <div class="filter-row">
          <span class="select"><select aria-label="Filtre"><option>Eléments de détail (1)</option></select><Glyph n="chevDown" /></span>
          <button class="plain edit-type"><Glyph class="edit-icon" n="typeProps" /><span>Modifier le type</span></button>
        </div>
        <table>
          <colgroup><col class="c1" /><col /><col class="c3" /></colgroup>
          <tbody>
            <tr class="group"><th colspan="2">Cotes</th><td><Glyph n="collapse" /></td></tr>
            <tr class="marked"><th>Surface<i class="mark"></i></th><td>117.000 m²</td><td></td></tr>
            <tr class="group"><th colspan="2">Données d'identification</th><td><Glyph n="collapse" /></td></tr>
            <tr v-for="p in identity" :key="p.id">
              <th><label :for="p.id">{{ p.label }}</label></th>
              <td><input :id="p.id" v-model="values[p.id]" type="text" :class="{ boxed: p.id === 'image' }" /></td>
              <td></td>
            </tr>
          </tbody>
        </table>
        <div class="props-foot"><a href="#aide">Aide des propriétés</a><button disabled>Appliquer</button></div>
      </aside>

      <section class="view">
        <div class="doc-tabs">
          <div class="doc-tab"><Glyph n="sheet" /><strong>Niveau 0</strong><button class="plain" aria-label="Fermer"><Glyph n="x" /></button></div>
          <button class="plain doc-menu" aria-label="Onglets"><Glyph n="customize" /></button>
        </div>
        <div class="drawing">
          <div class="canvas">
            <svg class="plan" viewBox="0 0 1363 736">
              <rect x="535" y="200" width="204" height="140" fill="#4a72d4" stroke="#1f48b4" stroke-width="2" />
              <g v-for="(g, i) in grips" :key="'g' + i" :transform="`translate(${g.x} ${g.y}) rotate(${g.turn})`" stroke="#20357c">
                <path d="M-3-5v10l-9-5z" fill="#7b8ee0" />
                <path d="M3-5v10l10-5z" fill="#1d45a8" />
              </g>
              <g v-for="(e, i) in elevations" :key="'e' + i" :transform="`translate(${e.x} ${e.y}) rotate(${e.turn})`">
                <path d="M5-9l9 9-9 9z" fill="#111" />
                <circle r="10" fill="#fff" stroke="#111" stroke-width="1.5" />
              </g>
            </svg>
            <div class="navbar">
              <i class="dot"></i>
              <button class="plain" aria-label="Roue 2D"><Glyph n="wheel" /></button>
              <Glyph class="faded" n="caret" />
              <hr />
              <button class="plain" aria-label="Zoom"><Glyph n="zoomFit" /></button>
              <Glyph class="faded" n="caret" />
              <i class="dot last"></i>
            </div>
          </div>
          <div class="vscroll"><Glyph n="up" /><i></i><Glyph n="down" /></div>
        </div>
        <div class="view-bar">
          <button class="plain scale">1 : 100</button>
          <button v-for="v in viewTools" :key="v" class="plain tool" :aria-label="v"><Glyph :n="v" /></button>
          <div class="hscroll"><Glyph n="chevLeft" /><i></i><Glyph n="chevRight" /></div>
          <span class="corner"><Glyph n="grip" /></span>
        </div>
      </section>

      <aside class="browser">
        <div class="pane-head"><span>Arborescenc...</span><button class="plain" aria-label="Fermer"><Glyph n="x" /></button></div>
        <ul>
          <li v-for="n in tree" :key="n.label" :class="{ child: n.child, current: n.current }">
            <span class="branch"><i v-if="n.toggle" class="box">{{ n.toggle === '+' ? '+' : '−' }}</i></span>
            <span v-if="n.icon" class="node-icon"><Glyph :n="n.icon" /></span>
            <span class="node-label">{{ n.label }}</span>
          </li>
        </ul>
        <div class="browser-scroll"><Glyph n="chevLeft" /><i></i><Glyph n="chevRight" /></div>
      </aside>
    </main>

    <footer class="status">
      <p>Cliquez pour sélectionner. Appuyez sur TAB pour afficher d'autres options, sur C</p>
      <Glyph n="tools" />
      <span class="select"><select aria-label="Sous-projet"><option></option></select><Glyph n="chevDown" /></span>
      <span class="req"><Glyph n="editReq" />:0</span>
      <button class="plain" aria-label="Variantes"><Glyph n="workset" /></button>
      <button class="plain" aria-label="Exclure"><Glyph n="exclude" /></button>
      <span class="select base"><select aria-label="Variante"><option>Modèle de base</option></select><Glyph n="chevDown" /></span>
      <div class="sel-tools">
        <button v-for="s in selectTools" :key="s" class="plain" :aria-label="s"><Glyph :n="s" /></button>
        <span class="count"><Glyph n="filter" />:1</span>
      </div>
    </footer>
  </div>
</template>

<style>
body { margin: 0; background: #c9c9c9; }
</style>

<style scoped>
* { box-sizing: border-box; }
.app { display: flex; flex-direction: column; min-height: 100vh; overflow: hidden; font: 15px/20px "Open Sans", "Noto Sans", sans-serif; color: #333; }
svg { flex: none; display: block; }
button { font: inherit; color: inherit; padding: 0; margin: 0; }
.plain { display: flex; align-items: center; justify-content: center; background: none; border: 0; }
h1, h2, p, ul { margin: 0; padding: 0; font: inherit; list-style: none; }

.titlebar { display: grid; grid-template-columns: 814fr 724fr 462fr; height: 36px; background: #808080; color: #f2f2f2; }
.title-left { display: flex; align-items: center; gap: 9px; height: 30px; padding-left: 6px; }
.logo { width: 20px; font-size: 22px; line-height: 30px; font-weight: 800; color: #1d5ca8; }
.titlebar h1 { line-height: 22px; white-space: nowrap; }
.title-right { display: flex; align-items: center; height: 30px; gap: 10px; white-space: nowrap; }
.account { gap: 5px; }
.bar { width: 1px; height: 20px; margin-left: 4px; background: #999; }
.help { gap: 10px; }
.window-buttons { display: flex; gap: 12px; margin-left: auto; padding-right: 5px; }

.tabs { display: flex; align-items: stretch; height: 26px; background: #808080; color: #ececec; white-space: nowrap; }
.file { width: 68px; margin-right: 3px; border: 0; background: #1f78bd; color: #fff; }
.tab { border: 0; background: none; padding: 0 12px; }
.more { margin-left: 7px; }
.toggle { gap: 8px; margin-left: 10px; }

.ribbon { display: flex; height: 126px; background: #e4eed8; border-bottom: 1px solid #73786e; }
.panel { display: flex; flex-direction: column; background: #eee; flex: none; }
.panel .body { display: flex; height: 99px; padding-top: 4px; }
.panel h2 { display: flex; align-items: center; justify-content: center; gap: 7px; height: 22px; white-space: nowrap; }
.p-select { width: 114px; }
.p-select .body { padding-left: 25px; }
.modify { display: flex; flex-direction: column; align-items: center; width: 66px; height: 94px; padding-top: 8px; gap: 8px; background: linear-gradient(#c4dcf4, #aed0f2); border: 1px solid #2a7fd4; }
.p-props { width: 88px; }
.stack { flex-direction: column; align-items: center; gap: 4px; }
.stack .plain { height: 44px; }
.pressed { display: flex; align-items: center; justify-content: center; width: 50px; height: 45px; background: #bcdcf8; border: 1px solid #2a7fd4; }
.p-clip { width: 110px; }
.p-clip .body { padding-left: 10px; gap: 11px; }
.large { display: flex; flex-direction: column; align-items: center; flex: none; background: none; border: 0; padding-top: 3px; white-space: nowrap; }
.large svg:first-child { height: 42px; margin-bottom: 4px; }
.large svg:last-child { margin-top: 4px; }
.off { width: 58px; color: #b4b4b4; }
.trio { display: flex; flex-direction: column; justify-content: space-between; height: 94px; }
.trio .plain { height: 31px; }
.p-geo { width: 208px; }
.p-geo .body { padding-left: 10px; }
.labelled { align-items: flex-start; width: 114px; }
.labelled .plain { gap: 8px; }
.duo { display: grid; grid-template-columns: 33px 33px; grid-template-rows: repeat(3, 31px); }
.geo-menu { width: 12px; height: 94px; }
.p-mod { width: 304px; }
.mod-large { display: grid; grid-template-columns: repeat(4, 51px); grid-template-rows: 48px 46px; }
.mod-small { display: grid; grid-template-columns: repeat(3, 33px); grid-template-rows: repeat(3, 31px); }
.p-view { width: 90px; }
.panel .view-grid { display: grid; grid-template-columns: 46px 32px; grid-template-rows: repeat(3, 31px); padding-left: 11px; }
.view-grid .plain { justify-content: flex-start; gap: 8px; }
.p-measure { width: 70px; }
.wide .plain { gap: 10px; }
.p-create { width: 108px; }
.panel .create-grid { display: grid; grid-template-columns: 49px 49px; grid-template-rows: 48px 46px; padding-left: 5px; }
.context { background: #dfecce; }
.context .body { background: #eee; }
.p-mode { width: 76px; }
.p-mode .body { justify-content: center; margin-left: 5px; }
.p-arrange { width: 231px; }
.p-arrange .body { justify-content: space-around; }

.quick { display: flex; align-items: center; height: 31px; padding-left: 2px; background: #808080; }
.quick .plain { width: 32px; height: 31px; }
.quick .drop { width: 15px; }
.quick .active { width: 30px; background: #c5e2fb; border: 2px solid #2a7fd4; }
.quick .after { margin-left: 9px; }
.quick .narrow { width: 16px; }
.sep { width: 8px; height: 28px; border-right: 1px solid #999; }
.options { height: 36px; padding-left: 9px; background: #eee; border-bottom: 2px solid #ccc; font-size: 14px; line-height: 35px; color: #222; }

.work { display: flex; flex: 1; background: #eee; }
.pane-head { display: flex; align-items: center; justify-content: space-between; height: 27px; padding: 0 4px 0 3px; }
.properties { display: flex; flex-direction: column; width: 480px; flex: none; background: #fff; }
.properties .pane-head { background: #f0f0f0; }
.type-box { display: flex; align-items: center; height: 94px; padding: 0 3px; background: #efefef; border: 1px solid #dcdcdc; border-width: 2px 1px; text-align: left; color: #555; }
.thumb { width: 85px; height: 87px; border: 1px solid #d0d0d0; background: #f1f1f1; }
.type-name { flex: 1; padding-left: 6px; line-height: 21px; }
.filter-row { display: flex; align-items: center; height: 30px; background: #f0f0f0; }
.select { position: relative; display: block; width: 326px; height: 28px; }
.select select { appearance: none; width: 100%; height: 100%; padding: 0 4px; border: 1px solid #a0a0a0; border-radius: 0; background: #e0e0e0; font: inherit; color: inherit; }
.select svg { position: absolute; right: 6px; top: 50%; margin-top: -4px; pointer-events: none; }
.edit-type { flex: 1; justify-content: flex-start; gap: 6px; padding: 0 0 3px 8px; }
.edit-icon { width: 21px; height: 24px; }
table { width: 100%; table-layout: fixed; border-collapse: collapse; }
.c1 { width: 233px; }
.c3 { width: 16px; }
tr { position: relative; height: 23px; }
th, td { padding: 0; border: 1px dotted #b4b4b4; font-weight: 400; text-align: left; line-height: 20px; white-space: nowrap; color: #222; }
th { padding-left: 10px; border-left: 0; }
tr.group { height: 24px; }
tr.group th, tr.group td { background: #dcdcdc; border: 0; }
tr.group th { padding-left: 3px; }
tr.marked th, tr.marked td { color: #777; }
tr.marked td { padding-left: 3px; }
.mark { position: absolute; left: 4px; right: 16px; top: 0; bottom: 0; border: 3px solid #e0181e; }
td input { display: block; width: 100%; height: 21px; padding: 0 3px; border: 0; background: #fff; font: inherit; outline: 0; }
td input.boxed { border: 2px solid #444; }
.props-foot { display: flex; align-items: center; justify-content: space-between; height: 37px; margin-top: auto; padding: 0 3px 4px; background: #f0f0f0; }
.props-foot a { padding-bottom: 6px; color: #2a6cc0; }
.props-foot button { width: 95px; height: 27px; border: 1px solid #bfbfbf; background: #ccc; color: #999; }

.view { display: flex; flex-direction: column; flex: 1; min-width: 0; margin-left: 3px; border-left: 2px solid #ccc; background: #fff; }
.doc-tabs { display: flex; justify-content: space-between; height: 27px; background: #c8c8c8; }
.doc-tab { display: flex; align-items: center; width: 167px; padding: 0 7px; gap: 8px; background: #fff; }
.doc-tab strong { font-size: 14px; font-weight: 700; }
.doc-tab button { margin-left: auto; }
.doc-menu { width: 18px; }
.drawing { display: flex; flex: 1; }
.canvas { position: relative; flex: 1; min-width: 0; }
.plan { width: 100%; height: 100%; }
.navbar { position: absolute; top: 3px; right: 4px; display: flex; flex-direction: column; align-items: center; width: 45px; height: 152px; padding: 3px; border: 2px solid #c8c8c8; border-radius: 7px; background: #f5f5f5; }
.navbar hr { width: 100%; height: 1px; margin: 6px 0 8px; border: 0; background: #bbb; }
.navbar .plain { margin-bottom: 8px; }
.dot { align-self: flex-end; width: 10px; height: 10px; margin-bottom: 10px; border: 2px solid #bbb; border-radius: 50%; }
.dot.last { margin: auto 0 0; }
.faded { opacity: 0.5; }
.vscroll { display: flex; flex-direction: column; align-items: center; justify-content: space-between; width: 18px; padding: 10px 0 8px; background: #f0f0f0; }
.vscroll i { width: 18px; height: 21px; background: #cdcdcd; }
.view-bar { display: flex; align-items: center; height: 24px; padding-bottom: 4px; background: linear-gradient(#f1f1f1 20px, #fff 20px); }
.scale { width: 102px; padding-left: 12px; font-size: 14px; color: #222; }
.tool { width: 27px; }
.hscroll { display: flex; align-items: center; justify-content: space-between; flex: 1; padding: 0 3px 0 11px; }
.hscroll i { width: 22px; height: 20px; background: #c8c8c8; }
.corner { display: flex; justify-content: center; width: 24px; }

.browser { display: flex; flex-direction: column; width: 134px; flex: none; padding-left: 1px; background: #fff; border-left: 8px solid #e8e8e8; overflow: hidden; }
.browser .pane-head { background: #f0f0f0; padding-right: 3px; }
.browser .pane-head span { font-size: 14px; }
.browser ul { padding-left: 4px; }
.browser li { position: relative; display: flex; align-items: center; height: 23px; white-space: nowrap; }
.browser li:nth-child(even) { height: 24px; }
.branch { display: flex; flex: none; align-items: center; width: 23px; height: 100%; background: linear-gradient(#ccc, #ccc) 7px 0 / 1px 100% no-repeat, linear-gradient(#ccc, #ccc) 7px 50% / 14px 1px no-repeat; }
.child .branch { width: 49px; padding-left: 26px; background: linear-gradient(#ccc, #ccc) 7px 0 / 1px 100% no-repeat, linear-gradient(#ccc, #ccc) 33px 0 / 1px 100% no-repeat, linear-gradient(#ccc, #ccc) 33px 50% / 16px 1px no-repeat; }
.browser li:last-child .branch { background-size: 1px 50%, 14px 1px; }
.browser li:first-child .branch { background-position: 7px 12px, 7px 50%; }
.box { display: flex; align-items: center; justify-content: center; width: 12px; height: 12px; margin-left: 1px; border: 1px solid #8a8a9a; background: #fff; font: 700 12px/10px "Open Sans", sans-serif; color: #2b2b8c; }
.node-icon { display: flex; flex: none; justify-content: center; width: 22px; }
.node-label { flex: 1 0 auto; padding-left: 6px; font-size: 14px; color: #222; }
.current .node-label { background: #e8e8e8; margin-left: 3px; padding-left: 3px; }
.browser-scroll { display: flex; align-items: center; justify-content: space-between; height: 21px; margin-top: auto; margin-bottom: 3px; padding: 0 5px 0 7px; background: #f0f0f0; }
.browser-scroll i { width: 36px; height: 20px; margin-right: 43px; background: #cdcdcd; }

.status { display: flex; align-items: center; height: 30px; padding-bottom: 1px; background: #c9c9c9; border-top: 1px solid #bbb; white-space: nowrap; color: #222; }
.status p { width: 562px; }
.status .select { width: 266px; height: 24px; margin-left: 4px; }
.status .select.base { margin-left: 10px; }
.status .select select { background: #fff; border: 0; color: #888; }
.req { display: flex; align-items: center; gap: 5px; margin: 0 34px 0 12px; }
.status > .plain + .plain { margin-left: 12px; }
.sel-tools { display: flex; align-items: center; gap: 11px; margin-left: auto; padding-right: 107px; }
.count { display: flex; align-items: center; gap: 1px; color: #555; }
</style>
